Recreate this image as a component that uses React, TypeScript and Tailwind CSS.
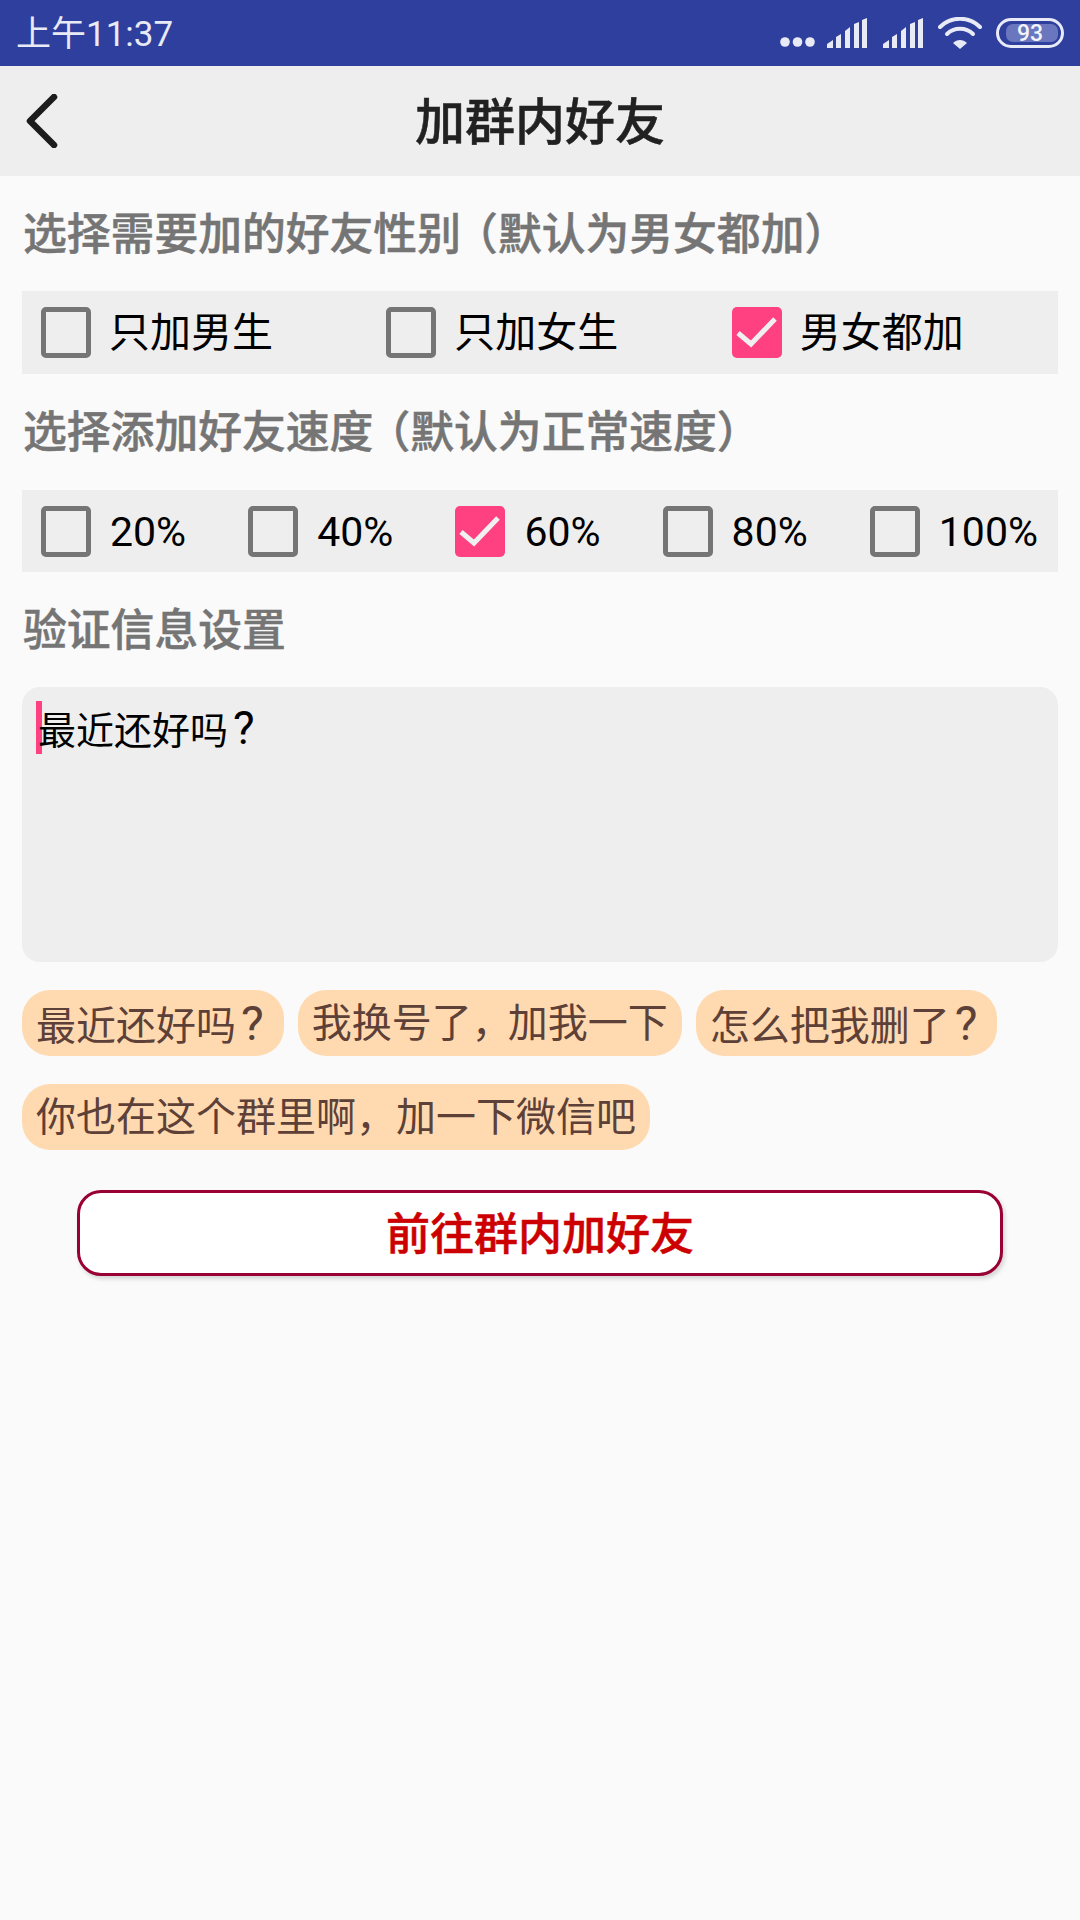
const CJK = "font-['Roboto','Noto_Sans_CJK_SC',sans-serif]";
const HEAVY = "font-medium [-webkit-text-stroke:0.5px_currentColor]";

const genders = [
  { label: "只加男生", checked: false },
  { label: "只加女生", checked: false },
  { label: "男女都加", checked: true },
];

const speeds = [
  { label: "20%", checked: false },
  { label: "40%", checked: false },
  { label: "60%", checked: true },
  { label: "80%", checked: false },
  { label: "100%", checked: false },
];

function Signal() {
  return (
    <svg width="40" height="30" viewBox="0 0 40 30" fill="#e8eaf6" aria-hidden="true">
      <path d="M0 30v-4l6-4v8zM9 30V19l5-3v14zM18 30V13l5-4v21zM27 30V6l5-2v26zM35 30V2l5-2v30z" />
    </svg>
  );
}

function StatusBar() {
  return (
    <div className="flex h-[66px] items-center justify-between bg-[#2f3f9e] pl-[16px] pr-[16px]">
      <span className="pt-[2px] text-[35px] leading-none text-[#e8eaf6]">上午11:37</span>
      <div className="flex items-center">
        <svg width="35" height="10" viewBox="0 0 35 10" fill="#e8eaf6" className="mt-[17px]" aria-hidden="true">
          <circle cx="5" cy="5" r="4.8" />
          <circle cx="17.5" cy="5" r="4.8" />
          <circle cx="30" cy="5" r="4.8" />
        </svg>
        <div className="ml-[12px] flex items-center gap-[16px]">
          <Signal />
          <Signal />
        </div>
        <svg width="44" height="32" viewBox="0 0 44 32" fill="none" className="ml-[15px]" aria-hidden="true">
          <path d="M2 10C13-1 31-1 42 10" stroke="#e8eaf6" strokeWidth="4" strokeLinecap="round" />
          <path d="M9 17c7-7 19-7 26 0" stroke="#e8eaf6" strokeWidth="4" strokeLinecap="round" />
          <path d="M22 32l-7-6c4-4 10-4 14 0z" fill="#e8eaf6" />
        </svg>
        <div className="relative ml-[14px] flex h-[30px] w-[68px] items-center justify-center rounded-full border-[3px] border-[#e8eaf6]">
          <div className="absolute inset-y-[3px] left-[7px] right-[3px] rounded-[7px] bg-[#6a76bd]" />
          <span className="relative text-[23px] font-medium leading-none text-[#f2f3fb]">93</span>
        </div>
      </div>
    </div>
  );
}

function NavBar() {
  return (
    <div className="relative flex h-[110px] items-center justify-center bg-[#eeeeee]">
      <svg width="34" height="54" viewBox="0 0 34 54" fill="none" className="absolute left-[25px] top-[28px]" aria-hidden="true">
        <path d="M29 3L5 27l24 24" stroke="#1c1c1c" strokeWidth="6.5" strokeLinecap="round" strokeLinejoin="round" />
      </svg>
      <h1 className={`pt-[4px] text-[50px] leading-none text-[#212121] ${HEAVY}`}>加群内好友</h1>
    </div>
  );
}

function Checkbox({ checked }: { checked: boolean }) {
  if (checked) {
    return (
      <span className="h-[51px] w-[50px] shrink-0 rounded-[5px] bg-[#ff4081]">
        <svg width="50" height="51" viewBox="0 0 50 51" fill="none" aria-hidden="true">
          <path d="M6 26l13 11L43 12" stroke="#f0f0f0" strokeWidth="5" />
        </svg>
      </span>
    );
  }
  return <span className="h-[51px] w-[50px] shrink-0 rounded-[5px] border-[5px] border-[#757575]" />;
}

function Option({ label, checked, gap }: { label: string; checked: boolean; gap: string }) {
  return (
    <label className={`flex items-center pl-[19px] ${gap}`}>
      <Checkbox checked={checked} />
      <span className="pt-[2px] text-[41px] leading-none text-black">{label}</span>
    </label>
  );
}

function SectionTitle({ children, height }: { children: React.ReactNode; height: string }) {
  return (
    <h2 className={`flex items-center pl-[1px] pt-[4px] text-[43.8px] leading-none text-[#757575] ${HEAVY} ${height}`}>
      <span>{children}</span>
    </h2>
  );
}

// half-width opening bracket with a gap before it
function Bracket() {
  return <span className="ml-[15px] [font-feature-settings:'halt']">（</span>;
}

// question mark with room on both sides, about as wide as a character
function Question() {
  return <span className="ml-[5px] mr-[6px] text-[1.2em] leading-none">?</span>;
}

function Chip({ children }: { children: React.ReactNode }) {
  return (
    <span className="flex h-[66px] items-center rounded-[28px] bg-[#ffdab0] px-[14px] pt-[2px] text-[40px] leading-none text-[#5d4037]">
      <span>{children}</span>
    </span>
  );
}

export default function App() {
  return (
    <div className={`min-h-[1920px] w-[1080px] bg-[#fafafa] ${CJK}`}>
      <StatusBar />
      <NavBar />
      <div className="px-[22px]">
        <SectionTitle height="h-[115px]">
          选择需要加的好友性别
          <Bracket />
          默认为男女都加）
        </SectionTitle>
        <div className="grid h-[83px] grid-cols-3 bg-[#eeeeee]">
          {genders.map((g) => (
            <Option key={g.label} label={g.label} checked={g.checked} gap="gap-[18px]" />
          ))}
        </div>
        <SectionTitle height="h-[116px]">
          选择添加好友速度
          <Bracket />
          默认为正常速度）
        </SectionTitle>
        <div className="grid h-[82px] grid-cols-5 bg-[#eeeeee]">
          {speeds.map((s) => (
            <Option key={s.label} label={s.label} checked={s.checked} gap="gap-[19px]" />
          ))}
        </div>
        <SectionTitle height="h-[115px]">验证信息设置</SectionTitle>
        <div className="relative h-[275px] rounded-[18px] bg-[#eeeeee] pl-[16px] pt-[19px]">
          <span className="absolute left-[14px] top-[14px] h-[53px] w-[6px] bg-[#ff4081]" />
          <p className="relative text-[38px] leading-[46px] text-black">
            最近还好吗
            <Question />
          </p>
        </div>
        <div className="mt-[28px] flex flex-wrap gap-x-[14px] gap-y-[28px]">
          <Chip>
            最近还好吗
            <Question />
          </Chip>
          <Chip>
            我换号了<span className="mr-[16px] [font-feature-settings:'halt']">，</span>加我一下
          </Chip>
          <Chip>
            怎么把我删了
            <Question />
          </Chip>
          <Chip>你也在这个群里啊，加一下微信吧</Chip>
        </div>
        <button
          type="button"
          className={`mx-auto mt-[40px] flex h-[86px] w-[926px] items-center justify-center rounded-[24px] border-[3px] border-[#990033] bg-white pt-[4px] text-[44px] leading-none text-[#cc0000] shadow-[2px_3px_4px_rgba(0,0,0,0.15)] ${HEAVY}`}
        >
          前往群内加好友
        </button>
      </div>
    </div>
  );
}
